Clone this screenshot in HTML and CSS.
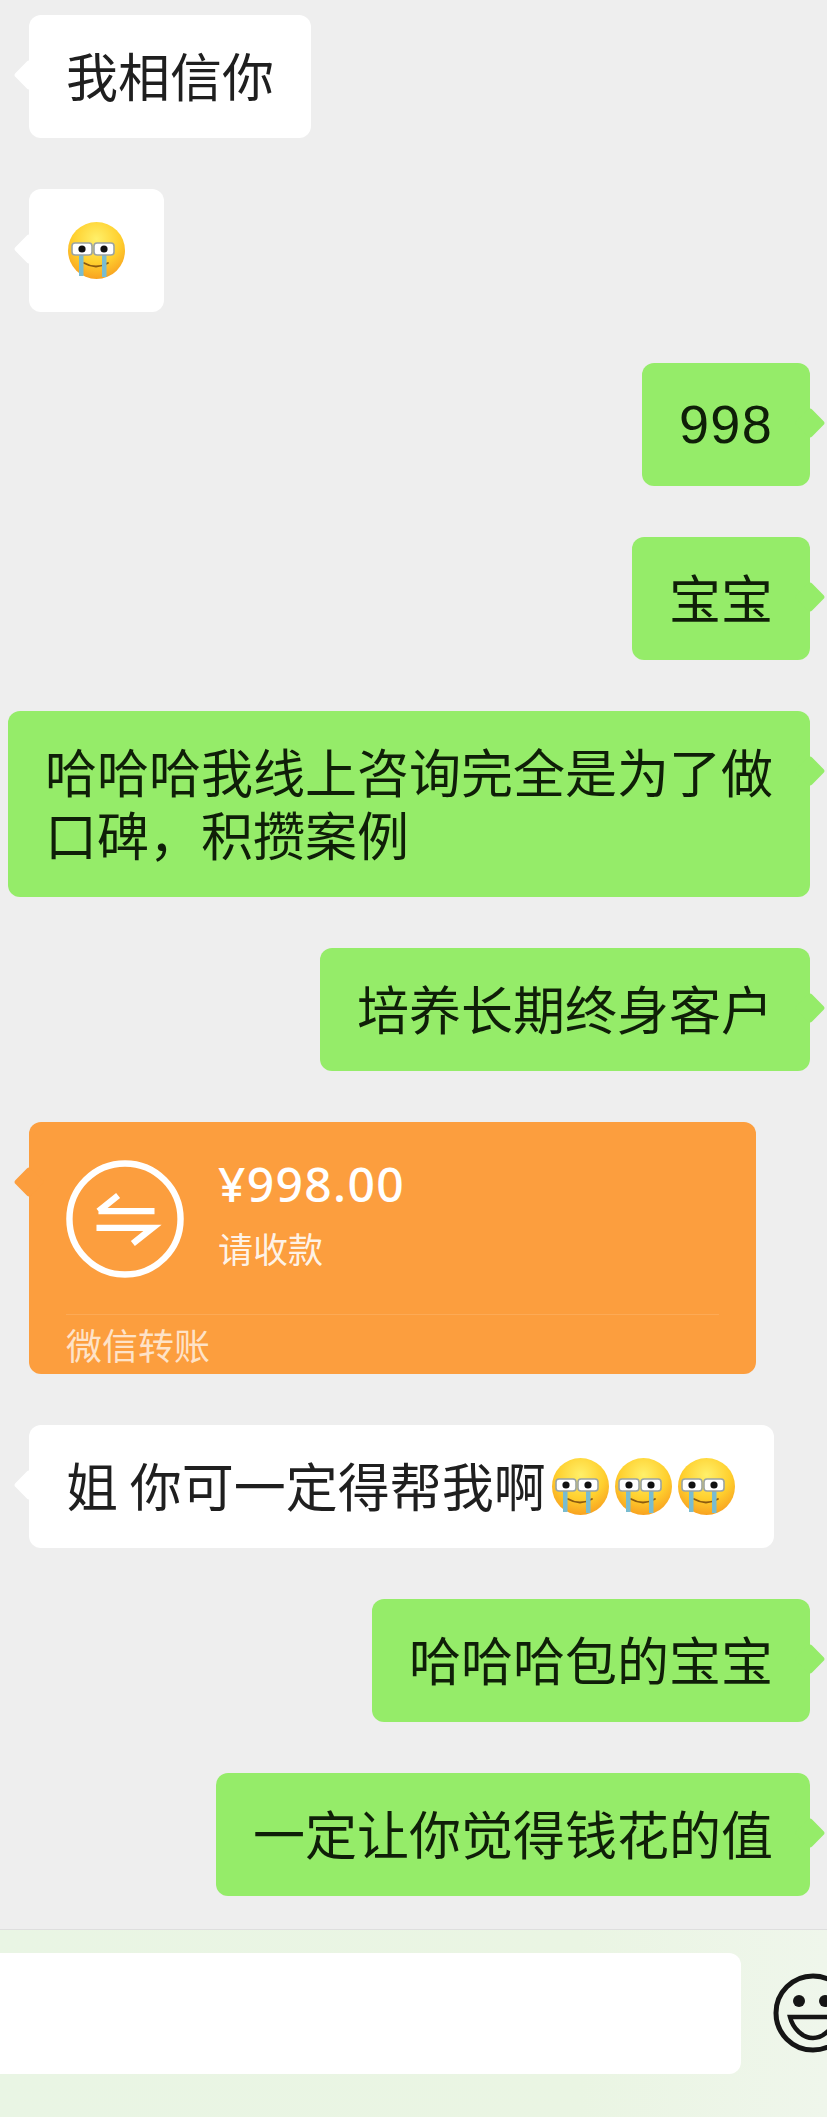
FILE: index.html
```html
<!DOCTYPE html>
<html lang="zh-CN">
<head>
  <meta charset="UTF-8" />
  <meta name="viewport" content="width=device-width, initial-scale=1.0"/>
  <title>微信聊天</title>
  <link rel="stylesheet" href="styles.css">
</head>
<body>

<svg class="defs" width="0" height="0">
  <defs>
    <radialGradient id="faceFill" cx="50%" cy="30%" r="75%">
      <stop offset="0%" stop-color="#fff06a"/>
      <stop offset="55%" stop-color="#ffd02e"/>
      <stop offset="100%" stop-color="#f79a1e"/>
    </radialGradient>
    <symbol id="cry" viewBox="0 0 61 61">
      <circle cx="30.5" cy="30.5" r="28.5" fill="url(#faceFill)"/>
      <path d="M18 43 Q30 50 42 43" fill="none" stroke="#8a5a10" stroke-width="1.8" stroke-linecap="round"/>
      <rect x="13" y="35" width="4.5" height="21" fill="#79bcd0"/>
      <rect x="36" y="35" width="4.5" height="22" fill="#79bcd0"/>
      <rect x="6" y="23" width="20" height="12" rx="3" fill="#fff" stroke="#9aa3a3" stroke-width="1.6"/>
      <rect x="28" y="23" width="20" height="12" rx="3" fill="#fff" stroke="#9aa3a3" stroke-width="1.6"/>
      <circle cx="16" cy="29" r="3.6" fill="#111"/>
      <circle cx="38" cy="29" r="3.6" fill="#111"/>
    </symbol>
  </defs>
</svg>

<div class="page">
  <div class="chat">
    <div class="bubble in">我相信你</div>
    <div class="bubble in"><svg class="emoji"><use href="#cry"/></svg></div>
    <div class="bubble out"><span class="num">998</span></div>
    <div class="bubble out">宝宝</div>
    <div class="bubble out wide">哈哈哈我线上咨询完全是为了做口碑，积攒案例</div>
    <div class="bubble out">培养长期终身客户</div>

    <div class="transfer">
      <div class="transfer-main">
        <svg class="transfer-icon" viewBox="0 0 120 120">
          <circle cx="60" cy="60" r="56.5" fill="none" stroke="#fff" stroke-width="6.5"/>
          <path d="M33 52 H90 M33 52 L53 36 M31 69 H88 L68 85" fill="none" stroke="#fff" stroke-width="6.5"/>
        </svg>
        <div class="transfer-info">
          <div class="amount">¥998.00</div>
          <div class="note">请收款</div>
        </div>
      </div>
      <div class="transfer-foot">微信转账</div>
    </div>

    <div class="bubble in">姐 你可一定得帮我啊<svg class="emoji after-text"><use href="#cry"/></svg><svg class="emoji"><use href="#cry"/></svg><svg class="emoji"><use href="#cry"/></svg></div>
    <div class="bubble out">哈哈哈包的宝宝</div>
    <div class="bubble out">一定让你觉得钱花的值</div>
  </div>

  <div class="footer">
    <div class="input"></div>
    <svg class="face-btn" viewBox="0 0 80 80">
      <circle cx="40" cy="40" r="37" fill="none" stroke="#151515" stroke-width="5"/>
      <circle cx="26" cy="28" r="6" fill="#151515"/>
      <circle cx="52" cy="28" r="6" fill="#151515"/>
      <path d="M17 44 H63 C60 56 50 65 40 65 C30 65 20 56 17 44 Z" fill="none" stroke="#151515" stroke-width="4.5"/>
    </svg>
  </div>
</div>

</body>
</html>
```

FILE: styles.css
```css
* {
  box-sizing: border-box;
}

body {
  margin: 0;
  background: #eeeeee;
  font-family: "Noto Sans CJK SC", "Noto Sans", sans-serif;
  color: #1f1f1f;
  overflow: hidden;
}

.defs {
  position: absolute;
}

.page {
  height: 2117px;
  display: flex;
  flex-direction: column;
  overflow: hidden;
}

.chat {
  flex: 1;
  display: flex;
  flex-direction: column;
  align-items: flex-start;
  gap: 51px;
  padding: 15px 17px 0 29px;
}

.bubble {
  position: relative;
  height: 123px;
  padding: 28px 37px 0;
  border-radius: 12px;
  font-size: 52px;
  line-height: 63px;
  background: #fff;
  white-space: nowrap;
}

.bubble::before {
  content: "";
  position: absolute;
  top: 49px;
  width: 22px;
  height: 22px;
  border-radius: 3px;
  background: inherit;
  transform: rotate(45deg);
}

.in::before {
  left: -11px;
}

.out {
  align-self: flex-end;
  background: #95ec69;
  color: #0f1f08;
}

.out::before {
  right: -11px;
}

.wide {
  width: 802px;
  height: 186px;
  white-space: normal;
}

.num {
  display: block;
  font-family: "Liberation Sans", sans-serif;
  font-size: 54px;
  letter-spacing: 1.3px;
  margin-top: 2px;
}

.emoji {
  display: inline-block;
  width: 61px;
  height: 61px;
  vertical-align: top;
  margin-top: 3px;
}

.emoji + .emoji {
  margin-left: 2px;
}

.emoji.after-text {
  margin-left: 4px;
}

.transfer {
  position: relative;
  width: 727px;
  height: 252px;
  padding: 38px 37px 0;
  border-radius: 12px;
  background: #fc9e3e;
  color: #fff;
}

.transfer::before {
  content: "";
  position: absolute;
  left: -11px;
  top: 49px;
  width: 22px;
  height: 22px;
  border-radius: 3px;
  background: inherit;
  transform: rotate(45deg);
}

.transfer-main {
  display: flex;
  gap: 34px;
  height: 155px;
  border-bottom: 1px solid #fdaa55;
}

.transfer-icon {
  width: 118px;
  height: 118px;
}

.amount {
  font-family: "Noto Sans", sans-serif;
  font-size: 48px;
  font-weight: 500;
  line-height: 48px;
  letter-spacing: 1.3px;
}

.note {
  margin-top: 18px;
  font-size: 35px;
  line-height: 44px;
  color: rgba(255, 255, 255, 0.9);
}

.transfer-foot {
  margin-top: 6px;
  font-size: 36px;
  line-height: 46px;
  color: rgba(255, 255, 255, 0.72);
}

.footer {
  height: 188px;
  display: flex;
  gap: 32px;
  padding-top: 23px;
  background: linear-gradient(90deg, #e9f5e4, #eaf5e3 70%, #eff6eb);
  border-top: 1px solid #dedede;
}

.input {
  flex: none;
  width: 741px;
  height: 121px;
  background: #fff;
  border-radius: 0 12px 12px 0;
}

.face-btn {
  flex: none;
  width: 80px;
  height: 80px;
  margin-top: 20px;
}
```
